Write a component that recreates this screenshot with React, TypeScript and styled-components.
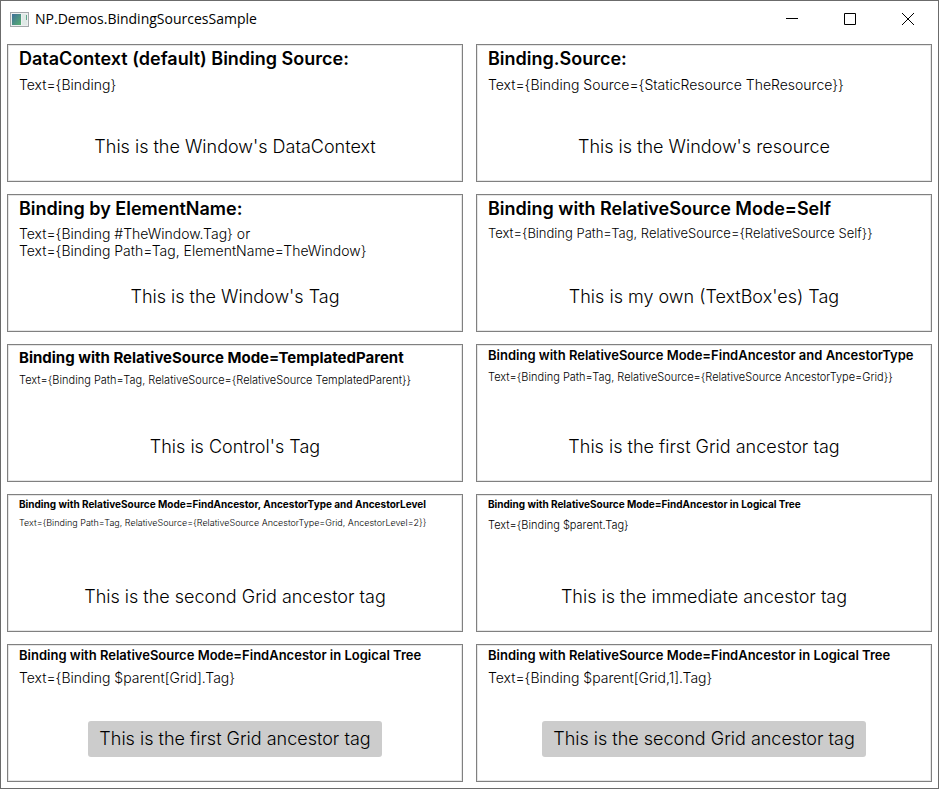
import React from "react";
import styled, { createGlobalStyle } from "styled-components";

const Global = createGlobalStyle`
  * { box-sizing: border-box; }
  body { margin: 0; background: #fff; color: #000; font-family: Inter, "Liberation Sans", sans-serif; }
`;

const Window = styled.div`
  min-height: 100vh;
  display: flex;
  flex-direction: column;
  border: 1px solid #6b6b6b;
  background: #fff;
`;

const TitleBar = styled.header`
  display: flex;
  align-items: center;
  height: 37px;
  padding: 0 1px 1px 9px;
`;

const Title = styled.h1`
  flex: 1;
  margin: 0 0 0 6px;
  font: 400 14px/20px "Open Sans", "Noto Sans", sans-serif;
`;

const CaptionButton = styled.button`
  display: grid;
  place-items: center;
  width: 58px;
  height: 36px;
  padding: 0;
  border: 0;
  background: transparent;
`;

const Panels = styled.main`
  flex: 1;
  display: grid;
  grid-template-columns: repeat(2, minmax(0, 1fr));
  grid-auto-rows: 1fr;
  gap: 12px 13px;
  padding: 6px;
`;

const Panel = styled.section`
  display: flex;
  flex-direction: column;
  min-height: 138px;
  padding: 4px 11px 0;
  border: 1px solid #808080;
  box-shadow: inset 0 0 0 1px #e6e6e6;
`;

const Heading = styled.h2<{ $size: number; $line: number; $weight?: number }>`
  margin: 0;
  font-size: ${(p) => p.$size}px;
  line-height: ${(p) => p.$line}px;
  font-weight: ${(p) => p.$weight ?? 600};
  white-space: nowrap;
`;

const Code = styled.p<{ $size: number; $gap: number }>`
  margin: ${(p) => p.$gap}px 0 0;
  font-size: ${(p) => p.$size}px;
  line-height: 17px;
  font-weight: 300;
  white-space: pre-line;
`;

const Result = styled.div`
  margin: auto auto 23px;
  font-size: 18px;
  line-height: 22px;
  font-weight: 300;
`;

const ResultButton = styled.button`
  margin: auto auto 24px;
  padding: 7px 11px;
  border: 0;
  border-radius: 3px;
  background: #ccc;
  color: #000;
  font: 300 18px/22px Inter, "Liberation Sans", sans-serif;
`;

type Item = {
  title: string;
  size: number;
  line: number;
  weight?: number;
  code: string;
  codeSize: number;
  gap: number;
  result: string;
  button?: boolean;
};

const items: Item[] = [
  { title: "DataContext (default) Binding Source:", size: 18, line: 20, code: "Text={Binding}", codeSize: 14, gap: 7, result: "This is the Window's DataContext" },
  { title: "Binding.Source:", size: 18, line: 20, code: "Text={Binding Source={StaticResource TheResource}}", codeSize: 14, gap: 7, result: "This is the Window's resource" },
  { title: "Binding by ElementName:", size: 18, line: 20, code: "Text={Binding #TheWindow.Tag} or\nText={Binding Path=Tag, ElementName=TheWindow}", codeSize: 14, gap: 6, result: "This is the Window's Tag" },
  { title: "Binding with RelativeSource Mode=Self", size: 18, line: 20, code: "Text={Binding Path=Tag, RelativeSource={RelativeSource Self}}", codeSize: 13, gap: 6, result: "This is my own (TextBox'es) Tag" },
  { title: "Binding with RelativeSource Mode=TemplatedParent", size: 15, line: 18, weight: 700, code: "Text={Binding Path=Tag, RelativeSource={RelativeSource TemplatedParent}}", codeSize: 11, gap: 5, result: "This is Control's Tag" },
  { title: "Binding with RelativeSource Mode=FindAncestor and AncestorType", size: 13, line: 13, code: "Text={Binding Path=Tag, RelativeSource={RelativeSource AncestorType=Grid}}", codeSize: 11, gap: 7, result: "This is the first Grid ancestor tag" },
  { title: "Binding with RelativeSource Mode=FindAncestor, AncestorType and AncestorLevel", size: 10, line: 11, weight: 700, code: "Text={Binding Path=Tag, RelativeSource={RelativeSource AncestorType=Grid, AncestorLevel=2}}", codeSize: 9, gap: 4, result: "This is the second Grid ancestor tag" },
  { title: "Binding with RelativeSource Mode=FindAncestor in Logical Tree", size: 10, line: 11, weight: 700, code: "Text={Binding $parent.Tag}", codeSize: 11, gap: 7, result: "This is the immediate ancestor tag" },
  { title: "Binding with RelativeSource Mode=FindAncestor in Logical Tree", size: 13, line: 13, code: "Text={Binding $parent[Grid].Tag}", codeSize: 14, gap: 7, result: "This is the first Grid ancestor tag", button: true },
  { title: "Binding with RelativeSource Mode=FindAncestor in Logical Tree", size: 13, line: 13, code: "Text={Binding $parent[Grid,1].Tag}", codeSize: 14, gap: 7, result: "This is the second Grid ancestor tag", button: true },
];

export default function App() {
  return (
    <Window>
      <Global />
      <TitleBar>
        <svg width="19" height="15" viewBox="0 0 19 15" aria-hidden="true">
          <defs>
            <linearGradient id="pane" x1="0" y1="0" x2="1" y2="1">
              <stop offset="0" stopColor="#3f6f9a" />
              <stop offset="1" stopColor="#58b070" />
            </linearGradient>
          </defs>
          <rect x=".5" y=".5" width="18" height="14" fill="#eef0f1" stroke="#a4a8ab" />
          <rect x="2" y="2" width="9" height="11" fill="url(#pane)" />
          <rect x="12" y="2" width="5" height="11" fill="#dfe9e6" />
          <path d="M16.5 3V8" stroke="#5fa58a" />
        </svg>
        <Title>NP.Demos.BindingSourcesSample</Title>
        <CaptionButton aria-label="Minimize">
          <svg width="12" height="12" stroke="#000" fill="none"><path d="M0 5.5H12" /></svg>
        </CaptionButton>
        <CaptionButton aria-label="Maximize">
          <svg width="12" height="12" stroke="#000" fill="none"><path d="M.5 .5h11v11H.5z" /></svg>
        </CaptionButton>
        <CaptionButton aria-label="Close">
          <svg width="12" height="12" stroke="#000" fill="none"><path d="M0 0L12 12M12 0L0 12" /></svg>
        </CaptionButton>
      </TitleBar>
      <Panels>
        {items.map((item, i) => (
          <Panel key={i}>
            <Heading $size={item.size} $line={item.line} $weight={item.weight}>{item.title}</Heading>
            <Code $size={item.codeSize} $gap={item.gap}>{item.code}</Code>
            {item.button ? <ResultButton>{item.result}</ResultButton> : <Result>{item.result}</Result>}
          </Panel>
        ))}
      </Panels>
    </Window>
  );
}
